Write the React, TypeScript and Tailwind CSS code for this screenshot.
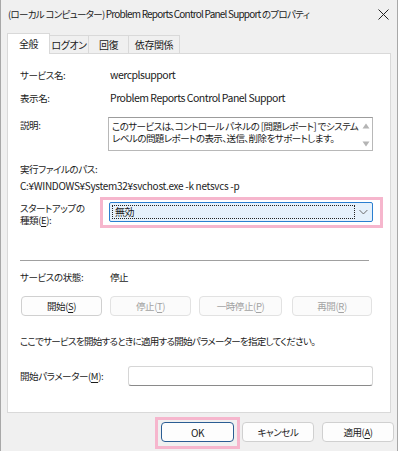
import React from 'react';

const U = ({ children }: { children: React.ReactNode }) => (
  <span className="underline underline-offset-[2px] decoration-[1px]">{children}</span>
);

// latin runs are set a little larger than the japanese ones
const L = ({ children, className = 'text-[10.5px] tracking-[-0.5px]' }: { children: React.ReactNode; className?: string }) => (
  <span className={className}>{children}</span>
);

const Btn = ({
  children,
  disabled = false,
  className = '',
}: {
  children: React.ReactNode;
  disabled?: boolean;
  className?: string;
}) => (
  <div
    className={`h-[20px] flex items-center justify-center rounded-[4px] border whitespace-nowrap ${
      disabled
        ? 'border-[#e2e2e2] bg-[#fbfbfb] text-[#a3a3a3]'
        : 'border-[#d0d0d0] bg-[#fdfdfd] text-[#1b1b1b]'
    } ${className}`}
  >
    {children}
  </div>
);

const App = () => {
  const tabs = [
    { name: 'ログオン', w: 'w-[39px]' },
    { name: '回復', w: 'w-[40px]' },
    { name: '依存関係', w: 'w-[51px]' },
  ];

  return (
    <div className="w-[400px] h-[451px] bg-white overflow-hidden whitespace-nowrap font-['Noto_Sans_CJK_JP',sans-serif] text-[9.5px] tracking-[-0.4px] text-[#1b1b1b] [font-feature-settings:'palt']">
      <div className="w-[398px] h-[451px] bg-[#f0f0f0] border-l border-r border-[#a8a8a8] flex flex-col">
        {/* title bar */}
        <div className="h-[28px] flex items-center justify-between pl-[7px] pr-[4px]">
          <span className="text-[9.5px] tracking-[-0.7px] leading-none whitespace-pre">
            (ローカル コンピューター) <L className="text-[10px] tracking-[-0.8px]">Problem Reports Control Panel Support</L> のプロパティ
          </span>
          <svg width="11" height="11" viewBox="0 0 11 11" className="mr-[4px]">
            <path d="M0.5 0.5 L10.5 10.5 M10.5 0.5 L0.5 10.5" stroke="#222" strokeWidth="1" />
          </svg>
        </div>

        {/* tabs */}
        <div className="relative z-10 h-[25px] flex items-end pl-[6px]">
          <div className="w-[43px] h-[21px] -mb-px bg-white border border-b-0 border-[#d9d9d9] flex items-center justify-center pb-[2px] text-[10px]">
            全般
          </div>
          {tabs.map((t) => (
            <div
              key={t.name}
              className={`${t.w} h-[18px] bg-[#f0f0f0] border border-b-0 border-l-0 border-[#d9d9d9] flex items-center justify-center text-[10px]`}
            >
              {t.name}
            </div>
          ))}
        </div>

        {/* panel */}
        <div className="mx-[6px] h-[360px] bg-white border border-[#d9d9d9] pl-[12px] flex flex-col">
          <div className="mt-[13px] h-[16px] flex items-center">
            <span className="w-[90px]">サービス名:</span>
            <L>wercplsupport</L>
          </div>
          <div className="mt-[7px] h-[16px] flex items-center">
            <span className="w-[90px]">表示名:</span>
            <L>Problem Reports Control Panel Support</L>
          </div>

          <div className="mt-[11px] flex">
            <span className="w-[88px] leading-[16px]">説明:</span>
            <div className="relative w-[265px] h-[34px] border border-[#b8b8b8] border-t-[#9c9c9c] pl-[3px] pt-[3px] leading-[11.5px] tracking-[-0.55px] whitespace-pre">
              このサービスは、コントロール パネルの [問題レポート] でシステム
              <br />
              レベルの問題レポートの表示、送信、削除をサポートします。
              <svg width="8" height="6" viewBox="0 0 8 6" className="absolute right-[2px] top-[5px]">
                <path d="M4 0.5 L7.5 5.5 L0.5 5.5 Z" fill="#b4b4b4" />
              </svg>
              <svg width="8" height="6" viewBox="0 0 8 6" className="absolute right-[2px] top-[23px]">
                <path d="M0.5 0.5 L7.5 0.5 L4 5.5 Z" fill="#b4b4b4" />
              </svg>
            </div>
          </div>

          <div className="mt-[11px] h-[15px] flex items-center">実行ファイルのパス:</div>
          <div className="h-[16px] flex items-center">
            <L className="text-[10px] tracking-[-0.3px]">C:¥WINDOWS¥System32¥svchost.exe -k netsvcs -p</L>
          </div>

          <div className="mt-[4px] flex">
            <div className="w-[80px] pt-[5px] leading-[12px]">
              スタートアップの
              <br />
              種類(<U>E</U>):
            </div>
            <div className="w-[283px] h-[31px] border-[3px] border-[#f6b6cd] pl-[6px] pt-[2px]">
              <div className="w-[264px] h-[20px] bg-[#e5f1fb] border border-[#2a7fd0] rounded-[2px] flex items-center pl-[2px] pr-[4px]">
                <div className="w-[247px] h-[14px] border border-dotted border-[#222] flex items-center pl-[2px] leading-none text-[10px]">
                  無効
                </div>
                <svg width="9" height="6" viewBox="0 0 9 6" className="ml-[4px]">
                  <path d="M0.5 1 L4.5 5 L8.5 1" fill="none" stroke="#6a6a6a" strokeWidth="1" />
                </svg>
              </div>
            </div>
          </div>

          <div className="mt-[32px] h-px w-[349px] bg-[#a0a0a0]" />

          <div className="mt-[8px] h-[16px] flex items-center">
            <span className="w-[90px]">サービスの状態:</span>
            <span>停止</span>
          </div>

          <div className="mt-[11px] flex">
            <Btn className="ml-[1px] w-[81px]">
              開始(<U>S</U>)
            </Btn>
            <Btn disabled className="ml-[8px] w-[81px]">
              停止(<U>T</U>)
            </Btn>
            <Btn disabled className="ml-[8px] w-[83px]">
              一時停止(<U>P</U>)
            </Btn>
            <Btn disabled className="ml-[10px] w-[80px]">
              再開(<U>R</U>)
            </Btn>
          </div>

          <div className="mt-[17px] h-[16px] flex items-center tracking-[-0.7px]">
            ここでサービスを開始するときに適用する開始パラメーターを指定してください。
          </div>

          <div className="mt-[17px] flex items-center">
            <span className="w-[108px]">
              開始パラメーター(<U>M</U>):
            </span>
            <div className="w-[245px] h-[20px] bg-white border border-[#d6d6d6] border-b-[#8a8a8a] rounded-[3px]" />
          </div>
        </div>

        {/* bottom buttons */}
        <div className="mt-[4px] flex justify-end pr-[3px]">
          <div className="w-[85px] h-[32px] border-[3px] border-[#f6b6cd] pl-[3px] pt-[2px]">
            <div className="w-[73px] h-[20px] flex items-center justify-center rounded-[4px] border border-[#2b5d93] bg-[#fdfdfd]">
              <L className="text-[10px]">OK</L>
            </div>
          </div>
          <Btn className="ml-[2px] mt-[5px] w-[72px]">キャンセル</Btn>
          <Btn className="ml-[8px] mt-[5px] w-[72px]">
            適用(<U>A</U>)
          </Btn>
        </div>
      </div>
    </div>
  );
};

export default App;
